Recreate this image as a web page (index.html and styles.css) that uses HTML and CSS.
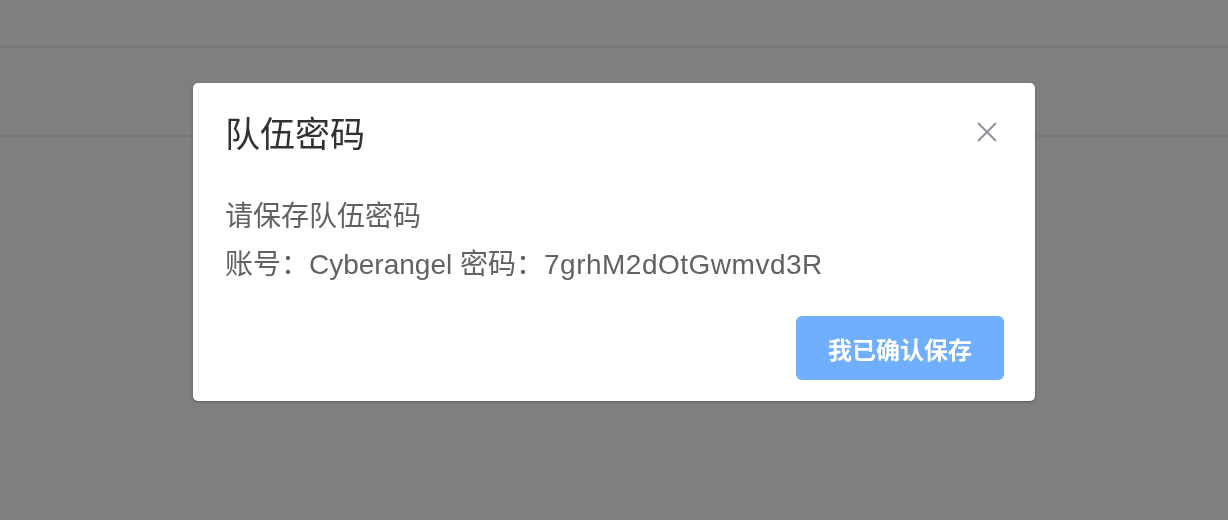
FILE: index.html
```html
<!DOCTYPE html>
<html lang="zh-CN">
<head>
<meta charset="utf-8">
<title>队伍密码</title>
<link rel="stylesheet" href="styles.css">
</head>
<body>
<div class="page">
  <div class="topbar"></div>
  <div class="subbar"></div>
</div>
<div class="overlay">
  <div class="dialog" role="dialog">
    <div class="dialog-header">
      <span class="dialog-title">队伍密码</span>
      <button class="dialog-close" aria-label="Close">
        <svg width="20" height="20" viewBox="0 0 20 20"><path d="M1 1 L19 19 M19 1 L1 19" stroke="#909399" stroke-width="2" fill="none"/></svg>
      </button>
    </div>
    <div class="dialog-body">
      <div class="line">请保存队伍密码</div>
      <div class="line">账号：Cyberangel 密码：<span class="code">7grhM2dOtGwmvd3R</span></div>
    </div>
    <div class="dialog-footer">
      <button class="btn-primary">我已确认保存</button>
    </div>
  </div>
</div>
</body>
</html>
```
FILE: styles.css
```css
html, body {
  margin: 0;
  padding: 0;
  height: 100%;
}
body {
  background: #ffffff;
  font-family: "Liberation Sans", "Noto Sans CJK SC", sans-serif;
}
.page {
  height: 100%;
}
.topbar {
  height: 46px;
  border-bottom: 2px solid #eeedf5;
}
.subbar {
  height: 87px;
  border-bottom: 2px solid #eeedf5;
}
.overlay {
  position: fixed;
  inset: 0;
  background: rgba(0, 0, 0, 0.5);
  display: flex;
  justify-content: center;
  align-items: flex-start;
}
.dialog {
  margin-top: 83px;
  width: 842px;
  height: 318px;
  box-sizing: border-box;
  background: #ffffff;
  border-radius: 5px;
  box-shadow: 0 1px 3px rgba(0, 0, 0, 0.3);
  display: flex;
  flex-direction: column;
}
.dialog-header {
  display: flex;
  justify-content: space-between;
  align-items: center;
  padding: 28px 38px 0 32px;
  height: 48px;
}
.dialog-title {
  font-size: 35px;
  line-height: 48px;
  color: #303133;
}
.dialog-close {
  border: 0;
  background: none;
  padding: 0;
  width: 20px;
  height: 20px;
  display: flex;
  margin-top: -6px;
}
.dialog-body {
  padding: 34px 32px 0 32px;
  color: #606266;
  font-size: 28px;
}
.line {
  line-height: 48px;
}
.code {
  letter-spacing: 0.5px;
}
.dialog-footer {
  display: flex;
  justify-content: flex-end;
  padding: 27px 31px 0 0;
}
.btn-primary {
  width: 208px;
  height: 64px;
  border: 0;
  border-radius: 6px;
  background: #70aefe;
  color: #ffffff;
  font-family: "Liberation Sans", "Noto Sans CJK SC", sans-serif;
  font-size: 24px;
  font-weight: bold;
  padding: 0;
}
```
